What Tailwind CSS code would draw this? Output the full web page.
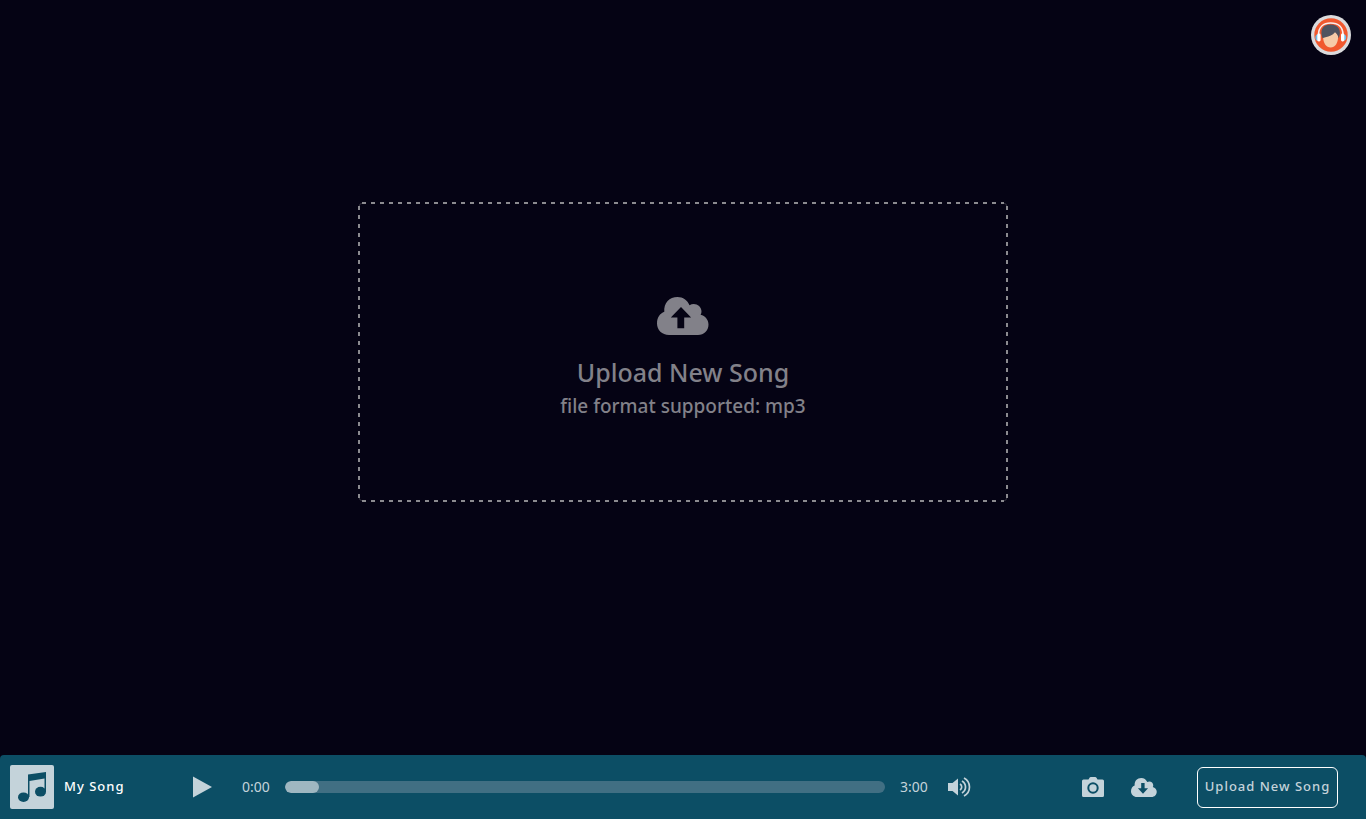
<!DOCTYPE html>
<html lang="en">
<head>
<meta charset="utf-8">
<meta name="viewport" content="width=device-width, initial-scale=1">
<title>My Song</title>
<script src="https://cdn.jsdelivr.net/npm/@tailwindcss/browser@4"></script>
</head>
<body class="flex min-h-screen flex-col bg-[#050314] font-['Noto_Sans',sans-serif]">
<header class="flex justify-end p-[15px]">
  <button type="button" aria-label="Account" class="size-10 rounded-full">
    <svg viewBox="0 0 40 40" class="size-10">
      <circle cx="20" cy="20" r="20" fill="#dbdbdd"/>
      <circle cx="20" cy="20" r="16.7" fill="#f1582e"/>
      <path d="M7.500 20C7.500 12 12.500 8 19.700 8S32 12 32 20" fill="none" stroke="#f7eeee" stroke-width="1.700"/>
      <path d="M12 21c0 7 3.200 11.500 7.600 11.500S27.200 28 27.200 21l-3-5-8 2z" fill="#f6cba8"/>
      <path d="M11.600 23.500C8.500 15.500 11.500 9.500 19.500 9.500c8 0 11.500 6 8.200 14-.3-2.500-1.700-4.700-3.700-6.300-2.500 3-5.500 4.300-9.500 5-1.200.2-2.300.5-2.900 1.300z" fill="#50535f"/>
      <path d="M7 19.300c-3.500.3-3.500 6.200 0 6.500zM32.600 19.300c3.500.3 3.500 6.200 0 6.500z" fill="#70bce8"/>
      <rect x="6.300" y="18.500" width="3.300" height="8" rx="1.400" fill="#fff"/>
      <rect x="30" y="18.500" width="3.300" height="8" rx="1.400" fill="#fff"/>
    </svg>
  </button>
</header>
<main class="flex flex-1 justify-center px-4 pt-[132px]">
  <button type="button" class="relative flex h-[300px] w-full max-w-[650px] flex-col items-center text-[#828189]">
    <svg aria-hidden="true" class="absolute inset-0 size-full" fill="none" stroke="#8c8b90" stroke-width="2">
      <path d="M4 1H646" stroke-dasharray="4 5"/><path d="M4 299H646" stroke-dasharray="4 5"/>
      <path d="M1 4V296" stroke-dasharray="4 5"/><path d="M649 4V296" stroke-dasharray="4 5"/>
      <path d="M1 5Q1 1 5 1M645 1Q649 1 649 5M1 295Q1 299 5 299M645 299Q649 299 649 295" stroke-opacity=".3" stroke-width="1"/>
    </svg>
    <svg aria-hidden="true" viewBox="0 0 52 38" class="mt-[95px] h-[38px] w-[52px]" fill="currentColor">
      <path fill-rule="evenodd" d="M12 38C5 38 0 33 0 26.500 0 20.500 3 16.500 7.300 14.800 6.500 6 12.500 0 20.500 0c5.500 0 10 3.200 12 8.200 5-3.200 12 .2 12 6.300 0 1.300-.3 2.300-.9 3.300C48.200 19 51.500 22.800 51.500 27.500 51.500 33.500 47 38 41 38zM24 10 13.800 20.600h6.600v10.700h6.800V20.600h6.900z"/>
    </svg>
    <span class="mt-[17px] text-[25px] leading-10 font-medium">Upload New Song</span>
    <span class="text-[19px] leading-7 font-medium">file format supported: mp3</span>
  </button>
</main>
<footer class="flex h-16 items-center rounded-t bg-[#0c4e65] pr-7 pl-2.5 text-[#c4d3da]">
  <svg aria-hidden="true" viewBox="0 0 44 44" class="size-11 shrink-0">
    <rect width="44" height="44" rx="2" fill="#c4d3da"/>
    <path d="M18 9.500 36 7v20h-1.500V13.500L19.500 16V32H18z" fill="#0c4e65"/>
    <ellipse cx="13.500" cy="32.200" rx="5.500" ry="4.800" fill="#0c4e65"/><ellipse cx="30.500" cy="26.700" rx="5.500" ry="4.900" fill="#0c4e65"/>
  </svg>
  <span class="ml-2.5 w-[118px] shrink-0 text-[13px] font-medium tracking-[1px] text-white">My Song</span>
  <button type="button" aria-label="Play" class="ml-[10px] shrink-0">
    <svg viewBox="0 0 20 22" class="block h-[22px] w-5" fill="currentColor"><path d="M1 .5 20 11 1 21.500z"/></svg>
  </button>
  <span class="ml-[30px] w-[43px] shrink-0 text-sm">0:00</span>
  <input type="range" aria-label="Song position" min="0" max="180" value="0" class="h-3 w-[600px] min-w-0 shrink appearance-none overflow-hidden rounded-full bg-[#416f83] [&::-webkit-slider-thumb]:h-3 [&::-webkit-slider-thumb]:w-[34px] [&::-webkit-slider-thumb]:appearance-none [&::-webkit-slider-thumb]:rounded-full [&::-webkit-slider-thumb]:bg-[#9fb7c1]">
  <span class="ml-[15px] w-12 shrink-0 text-sm">3:00</span>
  <button type="button" aria-label="Volume" class="shrink-0">
    <svg viewBox="0 0 24 20" class="block h-5 w-6" fill="none" stroke="currentColor" stroke-width="1.700">
      <path d="M0 6h4.500L10 1.500v17L4.500 14H0z" fill="currentColor" stroke="none"/>
      <path d="M12 7c2.300 1.500 2.300 4.500 0 6M14 4c4.700 3 4.700 9 0 12M16 1c7.300 4 7.300 14 0 18"/>
    </svg>
  </button>
  <div class="ml-auto flex shrink-0 items-center">
    <button type="button" aria-label="Take snapshot">
      <svg viewBox="0 0 22 20" class="block h-5 w-[22px]"><path d="M1.500 2.500h5L7.500.7Q8 0 8.800 0h4.400q.8 0 1.300.7l1 1.800h5Q22 2.500 22 4v14.500q0 1.500-1.500 1.500h-19Q0 20 0 18.500V4q0-1.500 1.500-1.500z" fill="currentColor"/><circle cx="11" cy="11" r="4.700" fill="none" stroke="#0c4e65" stroke-width="2"/></svg>
    </button>
    <button type="button" aria-label="Download" class="ml-[27px]">
      <svg viewBox="0 0 52 38" class="block h-[19px] w-[26px]" fill="currentColor"><path fill-rule="evenodd" d="M12 38C5 38 0 33 0 26.500 0 20.500 3 16.500 7.300 14.800 6.500 6 12.500 0 20.500 0c5.500 0 10 3.200 12 8.200 5-3.200 12 .2 12 6.300 0 1.300-.3 2.300-.9 3.300C48.200 19 51.500 22.800 51.500 27.500 51.500 33.500 47 38 41 38zM24 31.300 34.100 20.700h-6.900V10h-6.800v10.700h-6.600z"/></svg>
    </button>
    <button type="button" class="ml-10 flex h-[41px] w-[141px] items-center justify-center rounded-md border border-white text-[13px] font-medium tracking-[1px] whitespace-nowrap">Upload New Song</button>
  </div>
</footer>
</body>
</html>
